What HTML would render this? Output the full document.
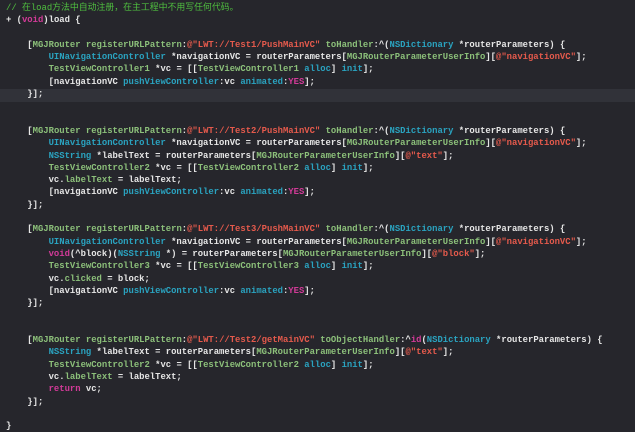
<!DOCTYPE html>
<html><head><meta charset="utf-8"><style>
html,body{margin:0;padding:0;background:#26262c;width:635px;height:429px;overflow:hidden}
pre{margin:0;position:absolute;left:6px;top:2px;font-family:"Liberation Mono","Noto Sans CJK SC",monospace;font-size:8.9px;line-height:12.3px;color:#e6e6e6;font-weight:bold}
.hl{position:absolute;left:0;top:89px;width:635px;height:13px;background:#313239}
.c{color:#4fbf3f;font-weight:normal}
.k{color:#d23a98}
.s{color:#e55a4c}
.g{color:#8cc07a}
.b{color:#2aa3c0}
</style></head><body>
<div class="hl"></div>
<pre><span class="c">// 在load方法中自动注册，在主工程中不用写任何代码。</span>
+ (<span class="k">void</span>)load {

    [<span class="g">MGJRouter</span> <span class="g">registerURLPattern</span>:<span class="s">@"LWT://Test1/PushMainVC"</span> <span class="g">toHandler</span>:^(<span class="b">NSDictionary</span> *routerParameters) {
        <span class="b">UINavigationController</span> *navigationVC = routerParameters[<span class="g">MGJRouterParameterUserInfo</span>][<span class="s">@"navigationVC"</span>];
        <span class="g">TestViewController1</span> *vc = [[<span class="g">TestViewController1</span> <span class="b">alloc</span>] <span class="b">init</span>];
        [navigationVC <span class="b">pushViewController</span>:vc <span class="b">animated</span>:<span class="k">YES</span>];
    }];


    [<span class="g">MGJRouter</span> <span class="g">registerURLPattern</span>:<span class="s">@"LWT://Test2/PushMainVC"</span> <span class="g">toHandler</span>:^(<span class="b">NSDictionary</span> *routerParameters) {
        <span class="b">UINavigationController</span> *navigationVC = routerParameters[<span class="g">MGJRouterParameterUserInfo</span>][<span class="s">@"navigationVC"</span>];
        <span class="b">NSString</span> *labelText = routerParameters[<span class="g">MGJRouterParameterUserInfo</span>][<span class="s">@"text"</span>];
        <span class="g">TestViewController2</span> *vc = [[<span class="g">TestViewController2</span> <span class="b">alloc</span>] <span class="b">init</span>];
        vc.<span class="g">labelText</span> = labelText;
        [navigationVC <span class="b">pushViewController</span>:vc <span class="b">animated</span>:<span class="k">YES</span>];
    }];

    [<span class="g">MGJRouter</span> <span class="g">registerURLPattern</span>:<span class="s">@"LWT://Test3/PushMainVC"</span> <span class="g">toHandler</span>:^(<span class="b">NSDictionary</span> *routerParameters) {
        <span class="b">UINavigationController</span> *navigationVC = routerParameters[<span class="g">MGJRouterParameterUserInfo</span>][<span class="s">@"navigationVC"</span>];
        <span class="k">void</span>(^block)(<span class="b">NSString</span> *) = routerParameters[<span class="g">MGJRouterParameterUserInfo</span>][<span class="s">@"block"</span>];
        <span class="g">TestViewController3</span> *vc = [[<span class="g">TestViewController3</span> <span class="b">alloc</span>] <span class="b">init</span>];
        vc.<span class="g">clicked</span> = block;
        [navigationVC <span class="b">pushViewController</span>:vc <span class="b">animated</span>:<span class="k">YES</span>];
    }];


    [<span class="g">MGJRouter</span> <span class="g">registerURLPattern</span>:<span class="s">@"LWT://Test2/getMainVC"</span> <span class="g">toObjectHandler</span>:^<span class="k">id</span>(<span class="b">NSDictionary</span> *routerParameters) {
        <span class="b">NSString</span> *labelText = routerParameters[<span class="g">MGJRouterParameterUserInfo</span>][<span class="s">@"text"</span>];
        <span class="g">TestViewController2</span> *vc = [[<span class="g">TestViewController2</span> <span class="b">alloc</span>] <span class="b">init</span>];
        vc.<span class="g">labelText</span> = labelText;
        <span class="k">return</span> vc;
    }];

}</pre>
</body></html>
